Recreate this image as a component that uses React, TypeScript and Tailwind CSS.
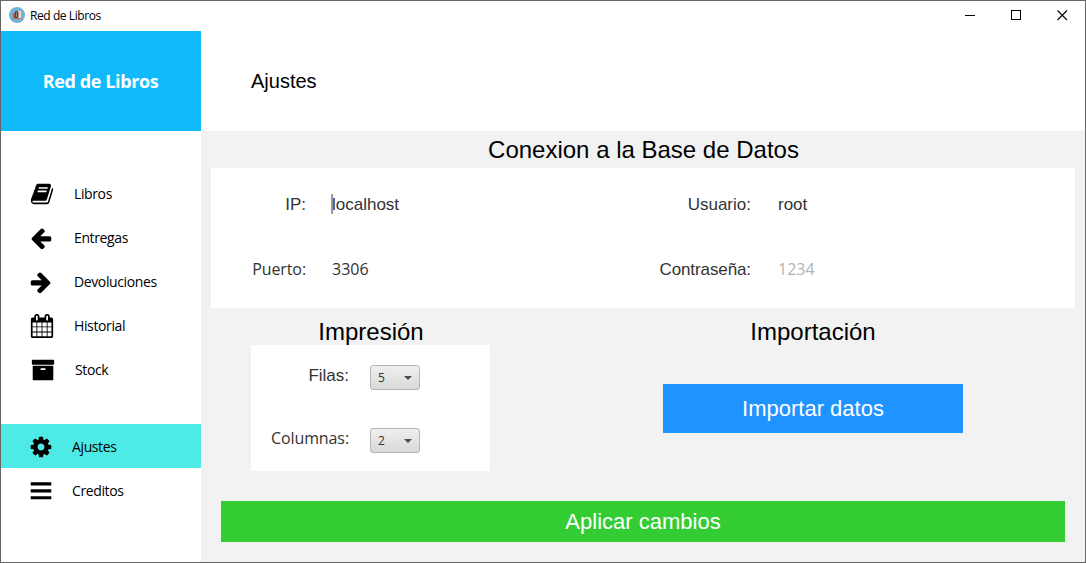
import type { ReactNode } from "react";

const BOOK =
  "M1703 478q40 57 18 129l-275 906q-19 64-76.5 107.5t-122.5 43.5h-923q-77 0-148.5-53.5t-99.5-131.5q-24-67-2-127 0-4 3-27t4-37q1-8-3-21.5t-3-19.5q2-11 8-21t16.5-23.5 16.5-23.5q23-38 45-91.5t30-91.5q3-10 .5-30t-.5-28q3-11 17-28t17-23q21-36 42-92t25-90q1-9-2.5-32t.5-28q4-13 22-30.5t22-22.5q19-26 42.5-84.5t27.5-96.5q1-8-3-25.5t-2-26.5q2-8 9-18t18-23 17-21q8-12 16.5-30.5t15-35 16-36 19.5-32 26.5-23.5 36-11.5 47.5 5.5l-1 3q38-9 51-9h761q74 0 114 56t18 130l-274 906q-36 119-71.5 153.5t-128.5 34.5h-869q-27 0-38 15-11 16-1 43 24 70 144 70h923q29 0 56-15.5t35-41.5l300-987q7-22 5-57 38 15 59 43zm-1064 2q-4 13 2 22.5t20 9.5h608q13 0 25.5-9.5t16.5-22.5l21-64q4-13-2-22.5t-20-9.5h-608q-13 0-25.5 9.5t-16.5 22.5zm-83 256q-4 13 2 22.5t20 9.5h608q13 0 25.5-9.5t16.5-22.5l21-64q4-13-2-22.5t-20-9.5h-608q-13 0-25.5 9.5t-16.5 22.5z";
const ARROW =
  "M1664 896v128q0 53-32.5 90.5t-84.5 37.5h-704l293 294q38 36 38 90t-38 90l-75 76q-37 37-90 37-52 0-91-37l-651-652q-37-37-37-90 0-52 37-91l651-650q38-38 91-38 52 0 90 38l75 74q38 38 38 91t-38 91l-293 293h704q52 0 84.5 37.5t32.5 90.5z";
const CALENDAR =
  "M192 1664h288v-288h-288v288zm352 0h320v-288h-320v288zm-352-352h288v-320h-288v320zm352 0h320v-320h-320v320zm-352-384h288v-288h-288v288zm736 736h320v-288h-320v288zm-384-736h320v-288h-320v288zm768 736h288v-288h-288v288zm-384-352h320v-320h-320v320zm-352-864v-288q0-13-9.5-22.5t-22.5-9.5h-64q-13 0-22.5 9.5t-9.5 22.5v288q0 13 9.5 22.5t22.5 9.5h64q13 0 22.5-9.5t9.5-22.5zm736 864h288v-320h-288v320zm-384-384h320v-288h-320v288zm384 0h288v-288h-288v288zm32-480v-288q0-13-9.5-22.5t-22.5-9.5h-64q-13 0-22.5 9.5t-9.5 22.5v288q0 13 9.5 22.5t22.5 9.5h64q13 0 22.5-9.5t9.5-22.5zm384-64v1280q0 52-38 90t-90 38h-1408q-52 0-90-38t-38-90v-1280q0-52 38-90t90-38h128v-96q0-66 47-113t113-47h64q66 0 113 47t47 113v96h384v-96q0-66 47-113t113-47h64q66 0 113 47t47 113v96h128q52 0 90 38t38 90z";
const ARCHIVE =
  "M1088 832q0-26-19-45t-45-19h-256q-26 0-45 19t-19 45 19 45 45 19h256q26 0 45-19t19-45zm576-192v960q0 26-19 45t-45 19h-1408q-26 0-45-19t-19-45v-960q0-26 19-45t45-19h1408q26 0 45 19t19 45zm64-448v256q0 26-19 45t-45 19h-1536q-26 0-45-19t-19-45v-256q0-26 19-45t45-19h1536q26 0 45 19t19 45z";
const COG =
  "M1152 896q0-106-75-181t-181-75-181 75-75 181 75 181 181 75 181-75 75-181zm512-109v222q0 12-8 23t-20 13l-185 28q-19 54-39 91 35 50 107 138 10 12 10 25t-9 23q-27 37-99 108t-94 71q-12 0-26-9l-138-108q-44 23-91 38-16 136-29 186-7 28-36 28h-222q-14 0-24.5-8.5t-11.5-21.5l-28-184q-49-16-90-37l-141 107q-10 9-25 9-14 0-25-11-126-114-165-168-7-10-7-23 0-12 8-23 15-21 51-66.5t54-70.5q-27-50-41-99l-183-27q-13-2-21-12.5t-8-23.5v-222q0-12 8-23t19-13l186-28q14-46 39-92-40-57-107-138-10-12-10-24 0-10 9-23 26-36 98.5-107.5t94.5-71.5q13 0 26 10l138 107q44-23 91-38 16-136 29-186 7-28 36-28h222q14 0 24.5 8.5t11.5 21.5l28 184q49 16 90 37l142-107q9-9 24-9 13 0 25 10 129 119 165 170 7 8 7 22 0 12-8 23-15 21-51 66.5t-54 70.5q26 50 41 98l183 28q13 2 21 12.5t8 23.5z";

function Glyph({ children, flip }: { children: ReactNode; flip?: boolean }) {
  return (
    <svg viewBox="0 0 1792 1792" className={flip ? "size-6 -scale-x-100" : "size-6"} fill="#000">
      {children}
    </svg>
  );
}

type ItemProps = { icon: ReactNode; label: string; pad: string; gap: string; active?: boolean };

function NavItem({ icon, label, pad, gap, active }: ItemProps) {
  return (
    <div className={`flex h-11 items-center ${pad} ${gap} ${active ? "bg-[#4deae6]" : ""}`}>
      {icon}
      <span className="font-['Open_Sans',sans-serif] text-[14px] leading-5 tracking-[-0.38px] text-black">{label}</span>
    </div>
  );
}

function Combo({ value }: { value: string }) {
  return (
    <div className="mt-[2px] flex h-[25px] w-[50px] items-center justify-between rounded-[3px] border border-[#b5b5b5] bg-linear-to-b from-[#efefef] to-[#d9d9d9] pr-[7px] pl-[7px] font-['Open_Sans',sans-serif] text-[12px] text-[#333]">
      <span>{value}</span>
      <svg width="8" height="4" viewBox="0 0 8 4" fill="#4d4d4d">
        <path d="M0 0h8L4 4z" />
      </svg>
    </div>
  );
}

const arial = "font-['Liberation_Sans',Arial,sans-serif]";
const sans = "font-['Open_Sans',sans-serif]";

export default function App() {
  return (
    <div className="flex h-[563px] w-[1086px] flex-col overflow-hidden border border-[#666] bg-white">
      <header className="flex h-[30px] shrink-0 items-center pl-2">
        <svg width="16" height="16" viewBox="0 0 16 16" className="-mt-[2px]">
          <circle cx="8" cy="8" r="8" fill="#76b1d3" />
          <path d="M4 6h2v5H4z" fill="#b5594a" />
          <path d="M6 4h3v7H6z" fill="#3e4a5a" />
          <path d="M7 5h1v5H7z" fill="#7d8c98" />
          <path d="M9 4h3v7H9z" fill="#e8d9c8" />
          <path d="M9 5h1v5H9z" fill="#d08168" />
          <path d="M4 11h8v1H4z" fill="#c46a55" />
        </svg>
        <span className={`${sans} ml-[5px] text-[12px] leading-4 tracking-[-0.42px] text-black`}>Red de Libros</span>
        <div className="-mt-[2px] ml-auto flex items-center pr-[17px]">
          <svg width="11" height="11" shapeRendering="crispEdges" className="mr-[35px]">
            <path d="M0 5h10v1H0z" />
          </svg>
          <svg width="11" height="11" fill="none" stroke="#000" shapeRendering="crispEdges" className="mr-[35px]">
            <path d="M.5 .5h9v9h-9z" />
          </svg>
          <svg width="11" height="11" fill="none" stroke="#000" strokeWidth="1.1">
            <path d="M.5 .5l9.500 9.500M10 .5L.5 10" />
          </svg>
        </div>
      </header>

      <div className="flex flex-1">
        <aside className="flex w-[200px] shrink-0 flex-col">
          <div className={`${sans} flex h-[100px] items-center justify-center bg-[#11bbfb] pr-px text-[18px] font-bold tracking-[-0.38px] text-white`}>
            Red de Libros
          </div>
          <nav className="mt-[41px]">
            <NavItem pad="pl-[29px]" gap="gap-5" label="Libros" icon={<Glyph><path d={BOOK} /></Glyph>} />
            <NavItem pad="pl-7" gap="gap-[21px]" label="Entregas" icon={<Glyph><path d={ARROW} /></Glyph>} />
            <NavItem pad="pl-7" gap="gap-[21px]" label="Devoluciones" icon={<Glyph flip><path d={ARROW} /></Glyph>} />
            <NavItem pad="pl-[29px]" gap="gap-5" label="Historial" icon={<Glyph><path d={CALENDAR} /></Glyph>} />
            <NavItem pad="pl-[30px]" gap="gap-5" label="Stock" icon={<Glyph><path d={ARCHIVE} /></Glyph>} />
          </nav>
          <nav className="mt-8">
            <NavItem active pad="pl-7 pt-[2px]" gap="gap-[19px]" label="Ajustes" icon={<Glyph><path d={COG} /></Glyph>} />
            <NavItem
              pad="pl-7 pt-[2px]"
              gap="gap-[19px]"
              label="Creditos"
              icon={
                <Glyph>
                  <path d="M128 240h1536v240H128zM128 760h1536v240H128zM128 1280h1536v240H128z" />
                </Glyph>
              }
            />
          </nav>
        </aside>

        <main className="flex flex-1 flex-col bg-[#f2f2f2]">
          <div className={`${arial} flex h-[100px] items-center bg-white pl-[50px] text-[20px] text-black`}>Ajustes</div>
          <div className={`${arial} flex flex-1 flex-col px-[10px] text-black`}>
            <h2 className="flex h-[37px] items-center justify-center pl-px text-[24px]">Conexion a la Base de Datos</h2>
            <div className="grid h-[140px] grid-cols-[95px_26px_324px_95px_27px_1fr] grid-rows-[65px_65px] items-center bg-white pt-1 text-[17px] leading-6 text-[#333]">
              <span className="text-right">IP:</span>
              <span className="-mt-px -mr-px ml-auto h-5 w-[2px] bg-[#999]" />
              <span>localhost</span>
              <span className="text-right">Usuario:</span>
              <span />
              <span>root</span>
              <span className={`${sans} -mt-[2px] text-right text-[16px] tracking-[-0.1px]`}>Puerto:</span>
              <span />
              <span className={`${sans} -mt-[2px] text-[16px]`}>3306</span>
              <span className="text-right tracking-[-0.1px]">Contraseña:</span>
              <span />
              <span className={`${sans} -mt-[2px] text-[16px] text-[#b3b3b3]`}>1234</span>
            </div>

            <div className="flex h-[163px]">
              <section className="ml-10 w-[239px]">
                <h2 className="flex h-[37px] items-center justify-center pt-[11px] pl-px text-[24px]">Impresión</h2>
                <div className={`${sans} grid h-[126px] grid-cols-[99px_50px] grid-rows-[63px_63px] items-center gap-x-5 bg-white text-[16px] text-[#333]`}>
                  <span className={`${arial} -mt-px pr-px text-right text-[17px]`}>Filas:</span>
                  <Combo value="5" />
                  <span className="-mt-[3px] pr-px text-right tracking-[-0.1px]">Columnas:</span>
                  <Combo value="2" />
                </div>
              </section>
              <section className="ml-[173px] flex w-[300px] flex-col">
                <h2 className="flex h-[37px] items-center justify-center pt-[11px] text-[24px]">Importación</h2>
                <button className="mt-[39px] h-[49px] bg-[#1f93ff] text-[22px] text-white">Importar datos</button>
              </section>
            </div>

            <button className="mx-[10px] mt-[30px] h-[41px] bg-[#33cd33] text-[22px] text-white">Aplicar cambios</button>
          </div>
        </main>
      </div>
    </div>
  );
}
